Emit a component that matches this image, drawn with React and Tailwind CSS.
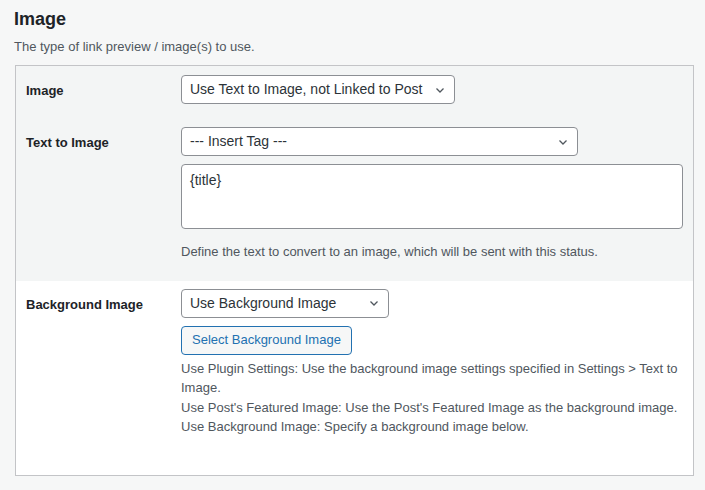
const Chevron = () => (
  <svg width="12" height="12" viewBox="0 0 12 12" fill="none" stroke="#50575e" strokeWidth="1.3">
    <path d="M2.5 4.5 L6 8 L9.5 4.5" />
  </svg>
);

const Select = ({ label, className }) => (
  <div className={`flex shrink-0 items-center justify-between whitespace-nowrap h-[29px] bg-white border border-[#8c8f94] rounded pl-[8px] pr-[8px] text-[14px] text-[#2c3338] ${className}`}>
    <span>{label}</span>
    <Chevron />
  </div>
);

export default function App() {
  return (
    <div className="min-h-screen w-[705px] h-[490px] bg-[#f6f7f7] pt-[8px] pl-[14px] pr-[11px] text-[#1d2327]" style={{ fontFamily: "'Liberation Sans', Arial, sans-serif" }}>
      <h2 className="text-[18px] font-semibold leading-[22px]">Image</h2>
      <p className="text-[13px] text-[#50575e] mt-[8px] leading-[18px]">The type of link preview / image(s) to use.</p>
      <div className="mt-[9px] ml-[1px] border border-[#c3c4c7] bg-white h-[411px]">
        <div className="bg-[#f3f5f5]">
          <div className="flex pt-[9px] pb-[13px]">
            <div className="w-[165px] shrink-0 pl-[10px] pt-[6px] text-[13px] font-bold">Image</div>
            <Select label="Use Text to Image, not Linked to Post" className="w-[274px] gap-2" />
          </div>
          <div className="flex pt-[10px] pb-[19px]">
            <div className="w-[165px] shrink-0 pl-[10px] pt-[6px] text-[13px] font-bold">Text to Image</div>
            <div className="flex flex-col">
              <Select label="--- Insert Tag ---" className="w-[397px]" />
              <div className="mt-[8px] w-[502px] h-[65px] bg-white border border-[#8c8f94] rounded px-[8px] py-[5px] text-[14px] text-[#2c3338]">{"{title}"}</div>
              <p className="mt-[13px] text-[13px] text-[#50575e]">Define the text to convert to an image, which will be sent with this status.</p>
            </div>
          </div>
        </div>
        <div className="flex pt-[8px]">
          <div className="w-[165px] shrink-0 pl-[10px] pt-[6px] text-[13px] font-bold">Background Image</div>
          <div className="flex flex-col items-start">
            <Select label="Use Background Image" className="w-[208px]" />
            <div className="mt-[8px] h-[29px] px-[10px] flex items-center border border-[#2271b1] rounded bg-[#f6f7f7] text-[13px] text-[#2271b1]">Select Background Image</div>
            <p className="mt-[4px] w-[500px] text-[13px] leading-[19.5px] text-[#50575e]">
              Use Plugin Settings: Use the background image settings specified in Settings &gt; Text to Image.<br />
              Use Post's Featured Image: Use the Post's Featured Image as the background image.<br />
              Use Background Image: Specify a background image below.
            </p>
          </div>
        </div>
      </div>
    </div>
  );
}
